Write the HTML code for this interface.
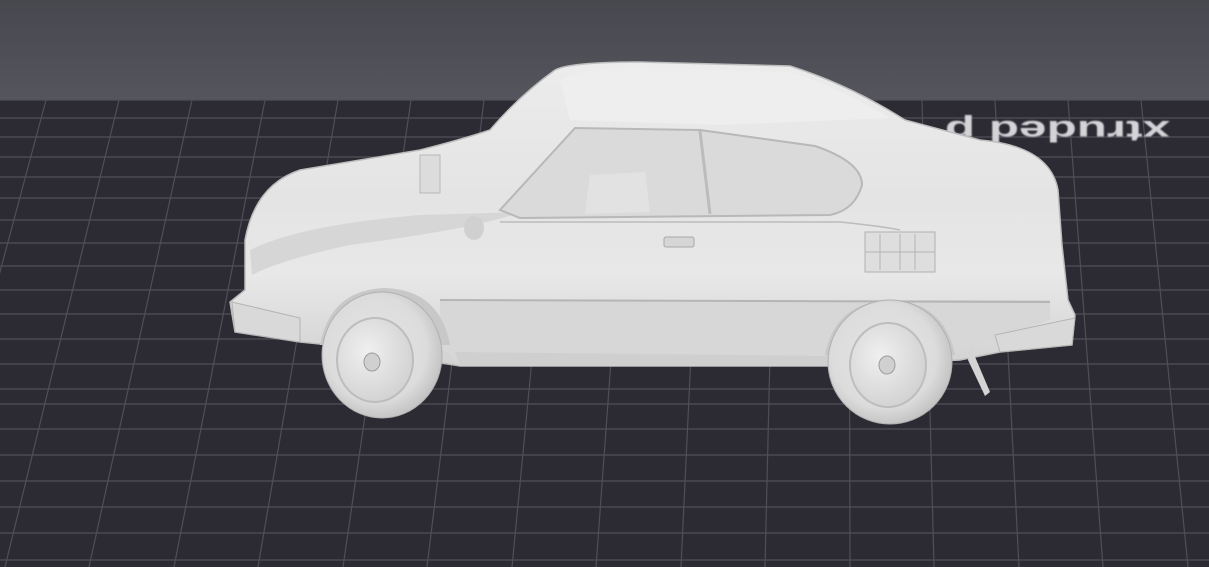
<!DOCTYPE html>
<html><head><meta charset="utf-8"><style>
html,body{margin:0;padding:0;width:1209px;height:567px;overflow:hidden;background:#2c2b33}
svg{display:block}
</style></head><body>
<svg width="1209" height="567" viewBox="0 0 1209 567" xmlns="http://www.w3.org/2000/svg">
<defs>
<linearGradient id="sky" x1="0" y1="0" x2="0" y2="1"><stop offset="0" stop-color="#47474e"/><stop offset="1" stop-color="#55555d"/></linearGradient>
<linearGradient id="body" x1="0" y1="0" x2="0" y2="1">
<stop offset="0" stop-color="#ececec"/><stop offset="0.45" stop-color="#e4e4e4"/><stop offset="0.7" stop-color="#e8e8e8"/><stop offset="1" stop-color="#d2d2d2"/></linearGradient>
<radialGradient id="tire" cx="0.45" cy="0.45" r="0.6"><stop offset="0" stop-color="#e4e4e4"/><stop offset="0.7" stop-color="#dcdcdc"/><stop offset="1" stop-color="#bdbdbd"/></radialGradient>
<radialGradient id="hub" cx="0.4" cy="0.4" r="0.7"><stop offset="0" stop-color="#f0f0f0"/><stop offset="1" stop-color="#cfcfcf"/></radialGradient>
<filter id="bl"><feGaussianBlur stdDeviation="0.8"/></filter>
</defs>
<rect width="1209" height="100" fill="url(#sky)"/>
<rect y="100" width="1209" height="467" fill="#2c2b33"/>
<g stroke="#4f4f58" stroke-width="1.2" fill="none">
<path d="M0 100H1209M0 118H1209M0 137H1209M0 157H1209M0 177H1209M0 198H1209M0 220H1209M0 243H1209M0 266H1209M0 290H1209M0 314H1209M0 339H1209M0 364H1209M0 389H1209M0 404H1209M0 429H1209M0 455H1209M0 481H1209M0 507H1209M0 533H1209M0 560H1209"/>
<path d="M-27 100L-168 567M46 100L-79 567M119 100L5 567M192 100L89 567M265 100L174 567M338 100L258 567M411 100L343 567M484 100L427 567M557 100L512 567M630 100L596 567M703 100L681 567M776 100L765 567M849 100L850 567M922 100L934 567M995 100L1019 567M1068 100L1103 567M1141 100L1188 567M1214 100L1272 567"/>
</g>
<text x="0" y="0" transform="translate(1170,121) rotate(180)" font-family="Liberation Sans, sans-serif" font-weight="bold" font-size="30" textLength="225" lengthAdjust="spacingAndGlyphs" fill="#d4d4d8" filter="url(#bl)">xtruded p</text>
<!-- car body -->
<path d="M555 70 Q570 62 640 62 L790 66 Q850 85 905 120 L980 140 Q1050 146 1058 190 L1062 245 L1068 300 L1075 315 L1072 345 L1000 352 L960 360 L830 366 L460 366 L330 345 L300 342 L235 332 L230 302 L245 290 L245 240 Q255 185 300 170 L420 150 Q460 140 490 130 Q520 95 555 70 Z" fill="url(#body)" stroke="#bdbdbd" stroke-width="1.5"/>
<path d="M560 80 Q580 68 640 68 L790 72 Q840 88 890 118 L720 125 L570 120 Z" fill="#eeeeee"/>
<path d="M250 250 Q300 225 420 215 L520 212 Q480 228 350 245 Q280 260 252 275 Z" fill="#d6d6d6"/>
<path d="M575 128 L700 130 L815 146 Q862 162 862 185 Q855 210 830 215 L520 218 L500 210 Z" fill="#dadada" stroke="#b8b8b8" stroke-width="2"/>
<path d="M700 131 L710 214" stroke="#bcbcbc" stroke-width="3"/>
<path d="M590 175 L645 172 L650 212 L585 214 Z" fill="#e2e2e2"/>
<path d="M500 222 L840 222 Q880 226 900 230" stroke="#bcbcbc" stroke-width="1.5" fill="none"/>
<path d="M440 300 L1050 300 L1050 320 L960 350 L830 366 L460 366 L440 345 Z" fill="#d7d7d7"/>
<path d="M440 300 L1050 302" stroke="#b5b5b5" stroke-width="2"/>
<rect x="664" y="237" width="30" height="10" rx="2" fill="#d6d6d6" stroke="#a8a8a8"/>
<rect x="865" y="232" width="70" height="40" fill="#dedede" stroke="#b0b0b0"/>
<path d="M880 234V270M900 234V270M915 234V270M865 252H935" stroke="#b4b4b4"/>
<rect x="420" y="155" width="20" height="38" fill="#dcdcdc" stroke="#b8b8b8"/>
<ellipse cx="474" cy="228" rx="10" ry="12" fill="#d0d0d0"/>
<path d="M232 302 L300 318 L300 342 L235 332 Z" fill="#d9d9d9" stroke="#b4b4b4"/>
<path d="M995 335 L1075 318 L1072 345 L1000 352 Z" fill="#d9d9d9" stroke="#b4b4b4"/>
<path d="M455 352 L830 356 L830 366 L460 366 Z" fill="#cfcfcf"/>
<path d="M970 345 L990 392 L985 396 L968 360 Z" fill="#d4d4d4"/>
<path d="M320 345 Q330 290 385 288 Q440 290 450 345" fill="#c8c8c8"/>
<path d="M825 355 Q835 302 890 300 Q945 302 955 355" fill="#c8c8c8"/>
<ellipse cx="382" cy="355" rx="60" ry="63" fill="url(#tire)" stroke="#b0b0b0"/>
<ellipse cx="375" cy="360" rx="38" ry="42" fill="url(#hub)" stroke="#bdbdbd" stroke-width="2"/>
<ellipse cx="372" cy="362" rx="8" ry="9" fill="#d0d0d0" stroke="#9c9c9c"/>
<ellipse cx="890" cy="362" rx="62" ry="62" fill="url(#tire)" stroke="#b0b0b0"/>
<ellipse cx="888" cy="365" rx="38" ry="42" fill="url(#hub)" stroke="#bdbdbd" stroke-width="2"/>
<ellipse cx="887" cy="365" rx="8" ry="9" fill="#d0d0d0" stroke="#9c9c9c"/>
</svg>
</body></html>
